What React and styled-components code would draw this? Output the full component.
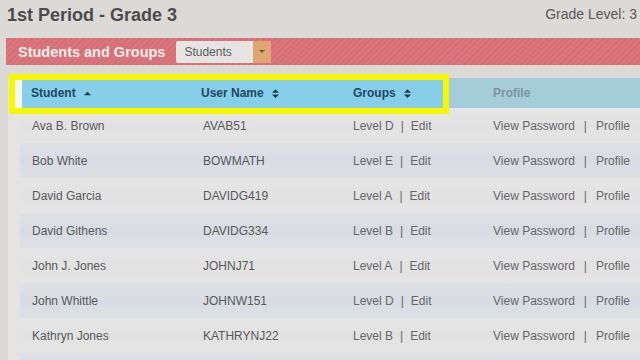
import styled, { createGlobalStyle } from 'styled-components';

const GlobalStyle = createGlobalStyle`
  html, body {
    margin: 0;
    padding: 0;
    background: #dcdad7;
    overflow: hidden;
  }
  body {
    font-family: 'Liberation Sans', Arial, sans-serif;
  }
`

const Page = styled.div`
  width: 640px;
  height: 360px;
  overflow: hidden;
  position: relative;
  background: #dcdad7;
`

const TopBar = styled.div`
  display: flex;
  justify-content: space-between;
  align-items: flex-start;
  height: 38px;
  padding: 5px 3px 0 7px;
  box-sizing: border-box;
`

const Title = styled.h1`
  margin: 0;
  font-size: 18px;
  font-weight: bold;
  color: #4b4b4e;
`

const GradeLevel = styled.div`
  font-size: 14px;
  color: #58585a;
  margin-top: 1px;
`

const RedBar = styled.div`
  display: flex;
  align-items: center;
  gap: 11px;
  height: 27px;
  margin-left: 6px;
  padding-left: 12px;
  background: repeating-linear-gradient(135deg, #db767c 0 2px, #d46f75 2px 4px);
`

const BarTitle = styled.div`
  font-size: 14.5px;
  font-weight: bold;
  color: #f8eeee;
`

const Select = styled.div`
  display: flex;
  width: 95px;
  height: 22px;
  background: #e7e5e3;
  border-radius: 2px;
  overflow: hidden;
`

const SelectText = styled.div`
  flex: 1;
  font-size: 12px;
  color: #5a5a5c;
  line-height: 22px;
  padding-left: 8px;
`

const SelectArrow = styled.div`
  width: 18px;
  background: #e0a66f;
  display: flex;
  align-items: center;
  justify-content: center;
  &::after {
    content: '';
    border-left: 3px solid transparent;
    border-right: 3px solid transparent;
    border-top: 3px solid #6e5a45;
  }
`

const Panel = styled.div`
  margin-top: 13px;
  margin-left: 8px;
  padding-left: 12px;
  background: #e5e4e2;
  height: 300px;
`

const HeaderRow = styled.div`
  display: grid;
  grid-template-columns: 170px 152px 140px 1fr;
  height: 30px;
  align-items: center;
  padding-left: 11px;
  background: linear-gradient(90deg, #87cfe8 0 429px, #a5cdd9 429px);
`

const HeadCell = styled.div`
  display: flex;
  align-items: center;
  gap: 8px;
  font-size: 12px;
  font-weight: bold;
  color: ${p => (p.$muted ? '#7f939c' : '#22475f')};
`

const SortIcon = styled.svg`
  width: 7px;
  height: 9px;
  fill: #1d3a4e;
`

const Row = styled.div`
  display: grid;
  grid-template-columns: 171px 150px 140px 1fr;
  height: 35px;
  align-items: center;
  padding-left: 12px;
  font-size: 12px;
  color: #58585a;
  background: ${p =>
    p.$alt
      ? 'linear-gradient(180deg, #dfe1e5, #d8dce2 50%, #dee0e4)'
      : 'linear-gradient(180deg, #e6e6e7, #e2e2e3 50%, #e5e5e6)'};
`

const Links = styled.div`
  color: #67676a;
  white-space: nowrap;
`

const Sep = styled.span`
  margin: 0 ${p => (p.$wide ? 9 : 7)}px;
`

const Highlight = styled.div`
  position: absolute;
  left: 9px;
  top: 74px;
  width: 440px;
  height: 40px;
  box-sizing: border-box;
  border: 6px solid #f7f700;
  pointer-events: none;
  &::before {
    content: '';
    position: absolute;
    left: 0;
    top: 0;
    bottom: 0;
    width: 7px;
    background: #f6f7f7;
  }
`

const Up = () => (
  <SortIcon viewBox="0 0 8 10"><path d="M0 7 L4 3 L8 7 Z" /></SortIcon>
)

const Both = () => (
  <SortIcon viewBox="0 0 8 10"><path d="M0 4 L4 0 L8 4 Z M0 6 L8 6 L4 10 Z" /></SortIcon>
)

const students = [
  ['Ava B. Brown', 'AVAB51', 'D'],
  ['Bob White', 'BOWMATH', 'E'],
  ['David Garcia', 'DAVIDG419', 'A'],
  ['David Githens', 'DAVIDG334', 'B'],
  ['John J. Jones', 'JOHNJ71', 'A'],
  ['John Whittle', 'JOHNW151', 'D'],
  ['Kathryn Jones', 'KATHRYNJ22', 'B'],
  ['Molly J. White', 'MOLLYW44', 'C'],
]

export default function App() {
  return (
    <Page>
      <GlobalStyle />
      <TopBar>
        <Title>1st Period - Grade 3</Title>
        <GradeLevel>Grade Level: 3</GradeLevel>
      </TopBar>
      <RedBar>
        <BarTitle>Students and Groups</BarTitle>
        <Select>
          <SelectText>Students</SelectText>
          <SelectArrow />
        </Select>
      </RedBar>
      <Panel>
        <HeaderRow>
          <HeadCell>Student <Up /></HeadCell>
          <HeadCell>User Name <Both /></HeadCell>
          <HeadCell>Groups <Both /></HeadCell>
          <HeadCell $muted>Profile</HeadCell>
        </HeaderRow>
        {students.map(([name, user, level], i) => (
          <Row key={user} $alt={i % 2 === 1}>
            <div>{name}</div>
            <div>{user}</div>
            <Links>Level {level}<Sep>|</Sep>Edit</Links>
            <Links>View Password<Sep $wide>|</Sep>Profile</Links>
          </Row>
        ))}
      </Panel>
      <Highlight />
    </Page>
  )
}
